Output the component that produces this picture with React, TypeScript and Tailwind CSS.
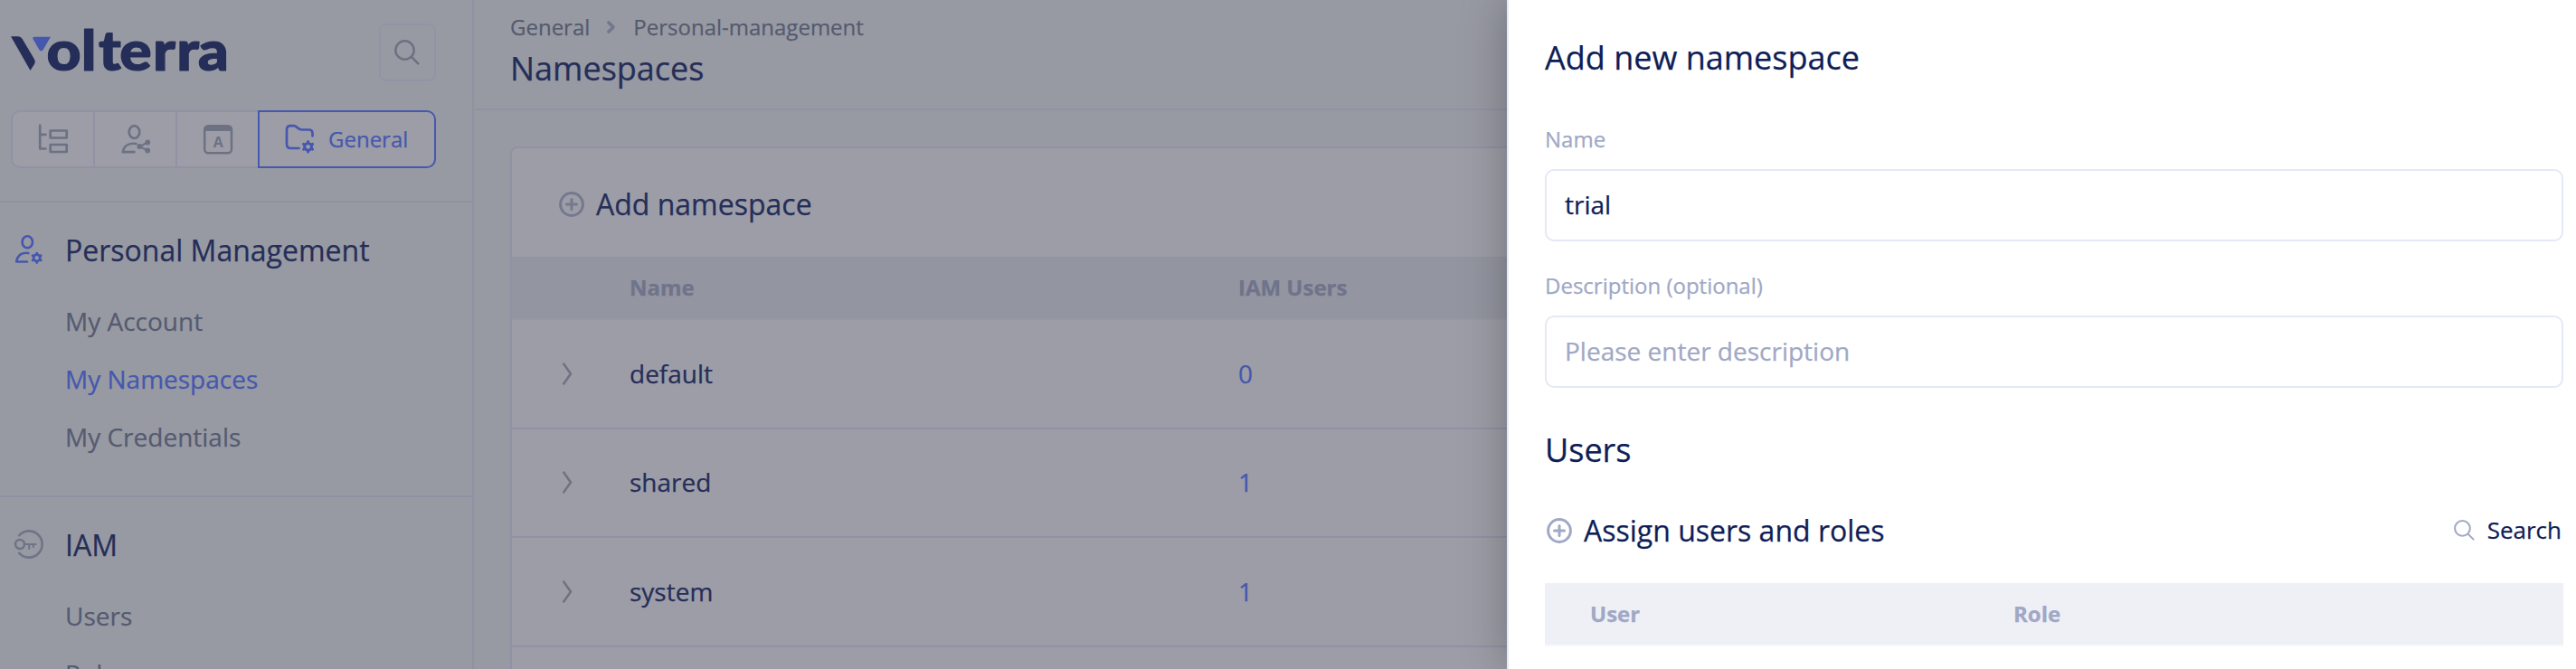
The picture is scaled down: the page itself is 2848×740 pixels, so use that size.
import React from "react";

type IconProps = { className?: string };

function Logo() {
  return (
    <svg width="244" height="48" viewBox="0 0 244 48" overflow="visible" role="img" aria-label="Volterra">
      <path d="M0 6.300H7.500Q11 6.300 12.800 9.300L26 31.500Q27.500 34 26.300 36.500L21.500 44Z" fill="#252e58" />
      <path d="M26 6.700H44L36 20.500Q33.500 24.500 31 20.500L24.600 9.300Q23.500 6.700 26 6.700Z" fill="#4558ae" />
      <text
        transform="scale(1.100 1)"
        x="36 70.700 88.200 109.300 142.700 166.700 188.200"
        y="44"
        fill="#252e58"
        stroke="#252e58"
        strokeWidth="1.200"
        strokeLinejoin="round"
        className="font-['Lato'] text-[60px] font-black"
      >
        olterra
      </text>
    </svg>
  );
}

function SearchIcon({ className }: IconProps) {
  return (
    <svg viewBox="0 0 28 28" fill="none" stroke="currentColor" strokeWidth="2.500" strokeLinecap="round" className={className}>
      <circle cx="11.500" cy="11.500" r="10.200" />
      <path d="M19 19L26.300 26.300" />
    </svg>
  );
}

function TreeIcon() {
  return (
    <svg width="34" height="34" viewBox="0 0 34 34" fill="none" stroke="currentColor" strokeWidth="2.700" strokeLinecap="round" strokeLinejoin="round">
      <path d="M2.200 1.500V27.500H8.500M2.200 11.800H8.500" />
      <rect x="13.700" y="7.500" width="18" height="8" />
      <rect x="13.700" y="23" width="18" height="8" />
    </svg>
  );
}

function PersonShareIcon() {
  return (
    <svg width="34" height="34" viewBox="0 0 34 34" fill="none" stroke="currentColor" strokeWidth="2.700" strokeLinecap="round" strokeLinejoin="round">
      <ellipse cx="15.500" cy="9" rx="5.800" ry="6.900" />
      <path d="M17.500 22C9.500 20.800 4 24.500 2.800 31.200H15.500" />
      <path d="M30.200 20.500L21.500 25.200L30.200 29.500" strokeWidth="2" />
      <g fill="currentColor" stroke="none">
        <circle cx="30.200" cy="20.500" r="2.900" />
        <circle cx="21.300" cy="25" r="2.900" />
        <circle cx="30.200" cy="29.500" r="2.900" />
      </g>
    </svg>
  );
}

function AppWindowIcon() {
  return (
    <svg width="34" height="34" viewBox="0 0 34 34" fill="none" stroke="currentColor" strokeWidth="2.500">
      <rect x="2.200" y="2.200" width="29.800" height="30" rx="4" />
      <path d="M3 5.200H31" strokeWidth="5.500" />
      <text x="17.200" y="25.700" textAnchor="middle" fill="currentColor" stroke="none" className="font-['Open_Sans'] text-[16px] font-bold">
        A
      </text>
    </svg>
  );
}

function GearMark() {
  return (
    <g>
      <circle r="3.900" fill="none" strokeWidth="3" />
      <path
        d="M0 -5V-5.700M0 5V5.700M4.400 -2.500L5 -2.900M-4.400 2.500L-5 2.900M4.400 2.500L5 2.900M-4.400 -2.500L-5 -2.900"
        strokeWidth="3"
        strokeLinecap="round"
      />
    </g>
  );
}

function FolderGearIcon() {
  return (
    <svg width="36" height="36" viewBox="0 0 36 36" fill="none" stroke="currentColor" strokeWidth="2.700" strokeLinecap="round" strokeLinejoin="round">
      <path d="M16.500 28H7.500Q3 28 3 23.500V7.500Q3 3.200 7 3.200H10.500Q12.500 3.200 14.500 5Q17 7.500 19.500 7.500H27.500Q31.500 7.500 31.500 11.500V14.500" />
      <g transform="translate(26.600 26.300)">
        <GearMark />
      </g>
    </svg>
  );
}

function PersonGearIcon() {
  return (
    <svg width="34" height="34" viewBox="0 0 34 34" fill="none" stroke="currentColor" strokeWidth="2.600" strokeLinecap="round" strokeLinejoin="round">
      <ellipse cx="15.300" cy="8.700" rx="5.700" ry="6.500" />
      <path d="M16.500 21C9 20 4.300 23.500 3.200 30.500H15" />
      <g transform="translate(25.700 26.300) scale(0.920)">
        <GearMark />
      </g>
    </svg>
  );
}

function KeyIcon() {
  return (
    <svg width="34" height="34" viewBox="0 0 34 34" fill="none" stroke="currentColor" strokeWidth="2.600" strokeLinecap="round">
      <path d="M6.200 7.200A14.600 14.600 0 1 1 6.200 26.800" />
      <circle cx="7" cy="17" r="5" />
      <path d="M12 17H24.500M17.200 17.500V22M21.800 17.500V20" strokeWidth="2.200" />
    </svg>
  );
}

function PlusCircle() {
  return (
    <svg width="28" height="28" viewBox="0 0 28 28" fill="none" stroke="currentColor" strokeWidth="3" strokeLinecap="round">
      <circle cx="14" cy="14" r="12.400" />
      <path d="M14 8.500V19.500M8.500 14H19.500" />
    </svg>
  );
}

function NavItem({ label, active = false }: { label: string; active?: boolean }) {
  return (
    <a className={`block h-16 pl-[60px] text-[28px] leading-[63px] ${active ? "text-[#4558ae]" : "text-[#555b70]"}`}>{label}</a>
  );
}

function NavSection({ icon, title, children }: { icon: React.ReactNode; title: string; children: React.ReactNode }) {
  return (
    <section className="border-t-2 border-[#9092a3] pt-5 pb-8 pl-3">
      <h2 className="mb-4 flex h-16 items-center text-[32px] text-[#252e58]">
        <span className="w-[60px] pl-[3px]">{icon}</span>
        <span className="pt-px">{title}</span>
      </h2>
      {children}
    </section>
  );
}

function Sidebar() {
  return (
    <aside className="w-[524px] shrink-0 border-r-2 border-[#9092a3]">
      <div className="flex items-start justify-between pt-[26px] pr-10 pl-3">
        <div className="pt-2">
          <Logo />
        </div>
        <button className="flex h-16 w-[63px] items-center justify-center rounded-lg border-2 border-[#9294a6] pr-px text-[#6c7284]">
          <SearchIcon className="h-7 w-7" />
        </button>
      </div>
      <div className="mt-8 mb-9 ml-3 flex h-16 w-[470px] text-[#6c7284]">
        <button className="flex w-[93px] items-center justify-center rounded-l-[10px] border-2 border-[#9092a5] bg-[#9d9da7]">
          <TreeIcon />
        </button>
        <button className="flex w-[91px] items-center justify-center border-y-2 border-r-2 border-[#9092a5] bg-[#9d9da7]">
          <PersonShareIcon />
        </button>
        <button className="flex w-[89px] items-center justify-center border-y-2 border-[#9092a5] bg-[#9d9da7]">
          <AppWindowIcon />
        </button>
        <button className="flex flex-1 items-center rounded-r-[10px] border-2 border-[#4558ae] bg-[#9d9da7] pl-[27px] text-2xl text-[#4558ae]">
          <FolderGearIcon />
          <span className="ml-[13px]">General</span>
        </button>
      </div>
      <NavSection title="Personal Management" icon={<span className="text-[#4558ae]"><PersonGearIcon /></span>}>
        <NavItem label="My Account" />
        <NavItem label="My Namespaces" active />
        <NavItem label="My Credentials" />
      </NavSection>
      <NavSection title="IAM" icon={<span className="text-[#6f7587]"><KeyIcon /></span>}>
        <NavItem label="Users" />
        <NavItem label="Roles" />
      </NavSection>
    </aside>
  );
}

const rows = [
  { name: "default", users: 0, height: "h-[121px]" },
  { name: "shared", users: 1, height: "h-[120px]" },
  { name: "system", users: 1, height: "h-[121px]" },
  { name: "", users: null, height: "h-[121px]" },
];

function NamespacesPage() {
  return (
    <main className="min-w-0 flex-1">
      <header className="h-[122px] border-b-2 border-[#9092a3] pt-[14px] pl-10">
        <nav className="flex h-8 items-center text-2xl text-[#555b70]">
          <span>General</span>
          <svg width="10" height="14" viewBox="0 0 10 14" fill="none" stroke="#73788f" strokeWidth="3.800" className="mr-[19px] ml-[19px]">
            <path d="M2 2L7 7L2 12" strokeLinecap="round" strokeLinejoin="round" />
          </svg>
          <span>Personal-management</span>
        </nav>
        <h1 className="mt-2 text-[36px] leading-[44px] text-[#252e58]">Namespaces</h1>
      </header>
      <div className="mt-10 ml-10 rounded-tl-lg border-t-2 border-l-2 border-[#9092a5] bg-[#9d9da7]">
        <div className="flex h-[120px] items-center pt-[3px] pl-[52px] text-[32px] text-[#252e58]">
          <span className="text-[#74798e]">
            <PlusCircle />
          </span>
          <span className="ml-[13px]">Add namespace</span>
        </div>
        <div className="flex h-[70px] items-center border-b-2 border-[#9898a3] bg-[#9395a0] text-2xl font-bold text-[#6f738b]">
          <span className="w-[673px] pl-[130px]">Name</span>
          <span className="pl-[130px]">IAM Users</span>
        </div>
        {rows.map((row, i) => (
          <div key={i} className={`flex items-center border-b-2 border-[#9092a5] pb-0.5 text-[28px] text-[#252e58] ${row.height}`}>
            {row.name && (
              <>
                <span className="w-[130px] pl-[55px] text-[#6e7281]">
                  <svg width="12" height="26" viewBox="0 0 12 26" fill="none" stroke="currentColor" strokeWidth="2.500" strokeLinecap="round" strokeLinejoin="round">
                    <path d="M2.200 2.500L10 13.500L2.200 24.500" />
                  </svg>
                </span>
                <span className="w-[673px]">{row.name}</span>
                <span className="text-[#4558ae]">{row.users}</span>
              </>
            )}
          </div>
        ))}
      </div>
    </main>
  );
}

function Drawer() {
  return (
    <div className="absolute inset-y-0 right-0 w-[1182px] border-l-2 border-[#e5e9f8] bg-white pt-[41px] pr-[14px] pl-10 text-[#0f1e57] shadow-[0_0_48px_rgba(0,0,0,0.28)]">
      <h2 className="text-[36px] leading-[46px]">Add new namespace</h2>
      <label className="mt-[51px] block text-2xl text-[#a0a8c5]">Name</label>
      <input
        defaultValue="trial"
        className="mt-[17px] block h-20 w-full rounded-[10px] border-2 border-[#e5e8f6] px-5 pb-0.5 text-[28px] font-medium outline-none"
      />
      <label className="mt-[33px] block text-2xl text-[#a0a8c5]">Description (optional)</label>
      <input
        placeholder="Please enter description"
        className="mt-[17px] block h-20 w-full rounded-[10px] border-2 border-[#e5e8f6] px-5 pb-0.5 text-[28px] outline-none placeholder:text-[#a0a8c5]"
      />
      <h2 className="mt-[46px] text-[36px] leading-[46px]">Users</h2>
      <div className="mt-[42px] flex h-12 items-center justify-between">
        <button className="flex items-center pl-0.5 text-[32px]">
          <span className="text-[#a0a8c5]">
            <PlusCircle />
          </span>
          <span className="ml-[13px]">Assign users and roles</span>
        </button>
        <button className="flex items-center pr-0.5 pb-0.5 text-[26px]">
          <span className="mr-[14px] text-[#a0a8c5]">
            <SearchIcon className="h-[23px] w-[23px]" />
          </span>
          Search
        </button>
      </div>
      <div className="mt-[34px] flex h-[70px] items-center border-b-2 border-[#f7f8fb] bg-[#eff0f6] text-2xl font-bold text-[#a0a8c5]">
        <span className="w-[468px] pl-[50px]">User</span>
        <span className="pl-[50px]">Role</span>
      </div>
    </div>
  );
}

export default function App() {
  return (
    <div className="relative flex h-[740px] w-[2848px] overflow-hidden bg-[#989aa3] font-['Open_Sans','Noto_Sans',sans-serif] [-webkit-text-stroke:0.25px]">
      <Sidebar />
      <NamespacesPage />
      <Drawer />
    </div>
  );
}
